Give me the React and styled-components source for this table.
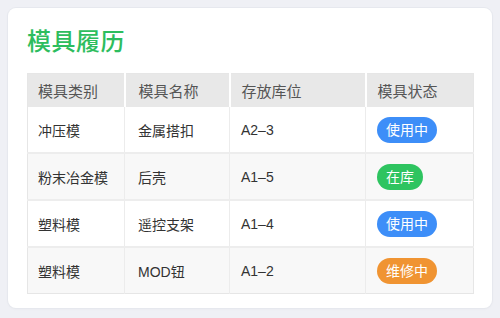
import React from 'react';
import styled, { createGlobalStyle } from 'styled-components';

const GlobalStyle = createGlobalStyle`
  html, body {
    margin: 0;
    padding: 0;
    background: #eff0f5;
  }
  body {
    font-family: "Liberation Sans", "Noto Sans CJK SC", sans-serif;
  }
`;

const molds = [
  { type: '冲压模', name: '金属搭扣', slot: 'A2–3', status: 'using' },
  { type: '粉末冶金模', name: '后壳', slot: 'A1–5', status: 'stock' },
  { type: '塑料模', name: '遥控支架', slot: 'A1–4', status: 'using' },
  { type: '塑料模', name: 'MOD钮', slot: 'A1–2', status: 'repair' }
];

const statusLabels = {
  using: '使用中',
  stock: '在库',
  repair: '维修中'
};

const statusColors = {
  using: '#3d8ef8',
  stock: '#2ec460',
  repair: '#f09432'
};

const columns = [
  { label: '模具类别', width: 97, pad: 10 },
  { label: '模具名称', width: 105, pad: 13 },
  { label: '存放库位', width: 136, pad: 11 },
  { label: '模具状态', width: 108, pad: 11 }
];

export default function App() {
  return (
    <Page>
      <GlobalStyle />
      <Card>
        <Title>模具履历</Title>
        <Table>
          <colgroup>
            {columns.map((col) => (
              <col key={col.label} style={{ width: col.width }} />
            ))}
          </colgroup>
          <thead>
            <tr>
              {columns.map((col) => (
                <HeadCell key={col.label} $pad={col.pad}>
                  {col.label}
                </HeadCell>
              ))}
            </tr>
          </thead>
          <tbody>
            {molds.map((mold, i) => (
              <Row key={i} $striped={i % 2 === 1}>
                <Cell $pad={columns[0].pad}>{mold.type}</Cell>
                <Cell $pad={columns[1].pad}>{mold.name}</Cell>
                <Cell $pad={columns[2].pad}>{mold.slot}</Cell>
                <Cell $pad={columns[3].pad}>
                  <Badge $color={statusColors[mold.status]}>
                    {statusLabels[mold.status]}
                  </Badge>
                </Cell>
              </Row>
            ))}
          </tbody>
        </Table>
      </Card>
    </Page>
  );
}

const Page = styled.div`
  padding: 8px;
  box-sizing: border-box;
  width: 500px;
  height: 318px;
`;

const Card = styled.div`
  width: 484px;
  height: 300px;
  box-sizing: border-box;
  background: #fff;
  border-radius: 8px;
  box-shadow: 0 0 0 1px #e6e8ee, 0 1px 3px rgba(0, 0, 0, 0.04);
  padding: 18px 19px 0 19px;
`;

const Title = styled.h2`
  margin: 0 0 15px 0;
  font-size: 24px;
  line-height: 32px;
  font-weight: 500;
  color: #2dbd5e;
  letter-spacing: 0.5px;
`;

const Table = styled.table`
  width: 446px;
  border-collapse: collapse;
  table-layout: fixed;
  border: 1px solid #e6e6e6;
`;

const HeadCell = styled.th`
  height: 33px;
  padding: 0 0 0 ${({ $pad }) => $pad}px;
  background: #e8e8e8;
  color: #555;
  font-size: 15px;
  font-weight: 400;
  text-align: left;
  border-left: 2px solid #fff;

  &:first-child {
    border-left: none;
  }
`;

const Row = styled.tr`
  background: ${({ $striped }) => ($striped ? '#f8f8f8' : '#fff')};
  border-top: 2px solid #ededed;

  &:first-child {
    border-top: none;
  }
`;

const Cell = styled.td`
  height: 45px;
  padding: 0 0 0 ${({ $pad }) => $pad}px;
  color: #333;
  font-size: 14px;
  border-left: 1px solid #ececec;

  &:first-child {
    border-left: none;
  }
`;

const Badge = styled.span`
  display: inline-block;
  height: 26px;
  line-height: 26px;
  padding: 0 9px;
  border-radius: 13px;
  background: ${({ $color }) => $color};
  color: #fff;
  font-size: 14px;
`;
